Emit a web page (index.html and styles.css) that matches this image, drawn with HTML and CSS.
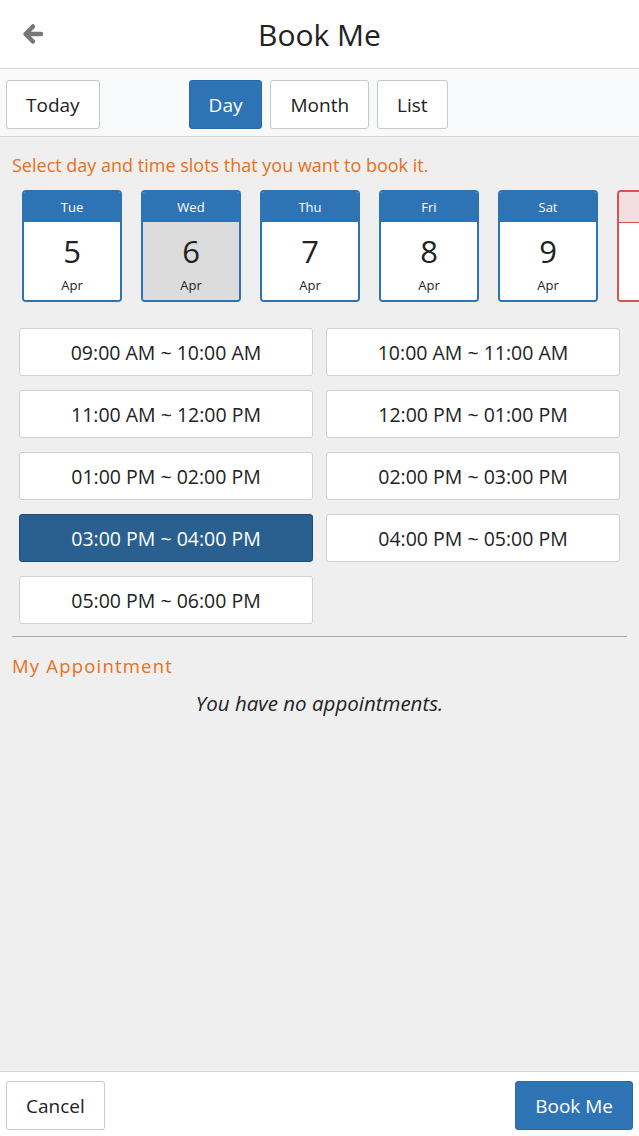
FILE: index.html
```html
<!DOCTYPE html>
<html lang="en">
<head>
    <meta charset="UTF-8">
    <meta name="viewport" content="width=device-width, initial-scale=1.0">
    <title>Book Me</title>
    <link rel="stylesheet" href="styles.css">
</head>
<body>

    <header class="topbar">
        <a class="back" href="#">
            <svg width="22" height="22" viewBox="0 0 22 22">
                <path d="M11 3.5 L3.5 11 L11 18.5 M4.5 11 H19" fill="none" stroke="#777" stroke-width="4.5" stroke-linecap="round" stroke-linejoin="round"/>
            </svg>
        </a>
        <h1>Book Me</h1>
    </header>

    <nav class="toolbar">
        <button class="btn">Today</button>
        <div class="views">
            <button class="btn active">Day</button>
            <button class="btn">Month</button>
            <button class="btn">List</button>
        </div>
    </nav>

    <main class="content">
        <p class="hint">Select day and time slots that you want to book it.</p>

        <div class="days">
            <div class="day"><div class="day-name">Tue</div><div class="day-body"><span class="num">5</span><span class="mon">Apr</span></div></div>
            <div class="day selected"><div class="day-name">Wed</div><div class="day-body"><span class="num">6</span><span class="mon">Apr</span></div></div>
            <div class="day"><div class="day-name">Thu</div><div class="day-body"><span class="num">7</span><span class="mon">Apr</span></div></div>
            <div class="day"><div class="day-name">Fri</div><div class="day-body"><span class="num">8</span><span class="mon">Apr</span></div></div>
            <div class="day"><div class="day-name">Sat</div><div class="day-body"><span class="num">9</span><span class="mon">Apr</span></div></div>
            <!-- next day is off, only its edge shows -->
            <div class="day off"><div class="day-name"></div><div class="day-body"></div></div>
        </div>

        <div class="slots">
            <button class="slot">09:00 AM ~ 10:00 AM</button>
            <button class="slot">10:00 AM ~ 11:00 AM</button>
            <button class="slot">11:00 AM ~ 12:00 PM</button>
            <button class="slot">12:00 PM ~ 01:00 PM</button>
            <button class="slot">01:00 PM ~ 02:00 PM</button>
            <button class="slot">02:00 PM ~ 03:00 PM</button>
            <button class="slot picked">03:00 PM ~ 04:00 PM</button>
            <button class="slot">04:00 PM ~ 05:00 PM</button>
            <button class="slot">05:00 PM ~ 06:00 PM</button>
        </div>

        <hr class="sep">

        <h2 class="section">My Appointment</h2>
        <p class="empty">You have no appointments.</p>
    </main>

    <footer class="bottombar">
        <button class="btn">Cancel</button>
        <button class="btn active">Book Me</button>
    </footer>

</body>
</html>
```

FILE: styles.css
```css
html, body {
    height: 100%;
}
body {
    margin: 0;
    font-family: "Open Sans", "Noto Sans", sans-serif;
    color: #222;
    background: #efefef;
    display: flex;
    flex-direction: column;
}
button {
    font-family: inherit;
    cursor: pointer;
}

.topbar {
    height: 68px;
    flex: none;
    background: #fff;
    border-bottom: 1px solid #d8d8d8;
    display: flex;
    align-items: center;
    justify-content: center;
    position: relative;
}
.topbar h1 {
    margin: 0;
    font-size: 30px;
    font-weight: normal;
    color: #222;
}
.back {
    position: absolute;
    left: 22px;
    top: 23px;
    line-height: 0;
}

.toolbar {
    height: 68px;
    flex: none;
    box-sizing: border-box;
    background: #f8f9fa;
    border-bottom: 1px solid #d8d8d8;
    display: flex;
    align-items: flex-start;
    padding: 11px 6px 0;
    gap: 89px;
}
.views {
    display: flex;
    gap: 8px;
}
.btn {
    height: 49px;
    padding: 0 19px;
    font-size: 19px;
    color: #222;
    background: #fff;
    border: 1px solid #c8c8c8;
    border-radius: 3px;
}
.btn.active {
    background: #2e74b5;
    border-color: #2a6aa6;
    color: #fff;
}

.content {
    flex: 1;
}
.hint {
    margin: 16px 12px 13px;
    font-size: 18px;
    line-height: 24px;
    color: #e8711a;
}

.days {
    display: flex;
    gap: 19px;
    padding-left: 22px;
    overflow: hidden;
}
.day {
    flex: 0 0 100px;
    height: 112px;
    border: 2px solid #2e74b5;
    border-radius: 4px;
    box-sizing: border-box;
    display: flex;
    flex-direction: column;
    overflow: hidden;
}
.day-name {
    height: 30px;
    flex: none;
    background: #2e74b5;
    color: #fff;
    font-size: 13px;
    display: flex;
    align-items: center;
    justify-content: center;
}
.day-body {
    flex: 1;
    background: #fff;
    display: flex;
    flex-direction: column;
    align-items: center;
}
.num {
    font-size: 31px;
    margin-top: 9px;
    line-height: 40px;
}
.mon {
    font-size: 13px;
    margin-top: 5px;
}
.day.selected .day-body {
    background: #dcdcdc;
}
.day.off {
    border-color: #d9534f;
}
.day.off .day-name {
    background: #f2dede;
    border-bottom: 1px solid #d9534f;
}

.slots {
    display: grid;
    grid-template-columns: 1fr 1fr;
    gap: 14px 13px;
    padding: 0 19px;
    margin-top: 26px;
}
.slot {
    height: 48px;
    font-size: 19.5px;
    color: #222;
    background: #fff;
    border: 1px solid #cfcfcf;
    border-radius: 3px;
}
.slot.picked {
    background: #29608f;
    border-color: #1f4d75;
    color: #fff;
}

.sep {
    margin: 12px 12px 0;
    border: 0;
    border-top: 1px solid #a8a8a8;
}
.section {
    margin: 16px 12px 0;
    font-size: 18.5px;
    font-weight: normal;
    letter-spacing: 1.2px;
    color: #e8711a;
}
.empty {
    margin: 11px 0 0;
    text-align: center;
    font-size: 20.5px;
    font-style: italic;
    color: #222;
}

.bottombar {
    height: 65px;
    flex: none;
    box-sizing: border-box;
    background: #fff;
    border-top: 1px solid #d8d8d8;
    display: flex;
    align-items: flex-start;
    justify-content: space-between;
    padding: 9px 6px 0;
}
```
